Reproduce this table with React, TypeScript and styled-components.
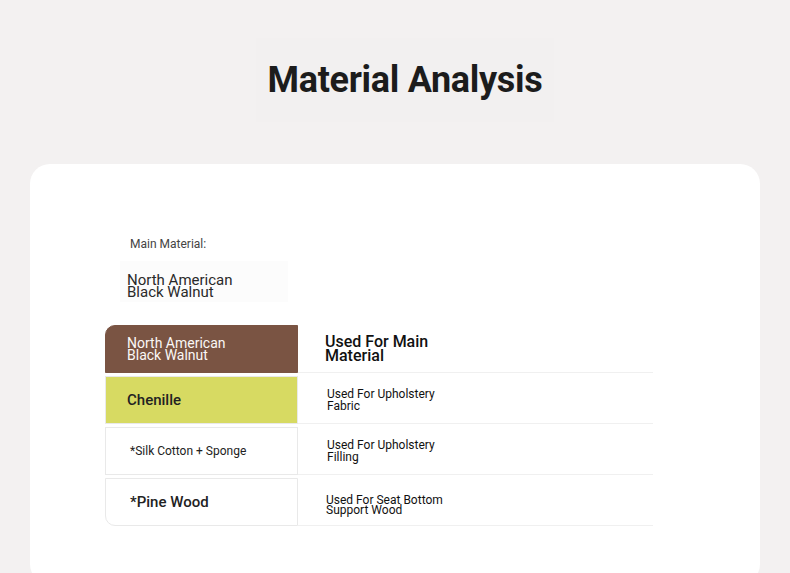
import { createGlobalStyle, styled } from 'styled-components';

const rows = [
  {
    name: ['North American', 'Black Walnut'],
    use: ['Used For Main', 'Material'],
    tone: 'walnut',
    nameSize: 14,
    useSize: 16,
    useLine: 14,
    usePad: 27,
    useShift: 0,
  },
  {
    name: ['Chenille'],
    use: ['Used For Upholstery', 'Fabric'],
    tone: 'chenille',
    nameSize: 15,
    useSize: 12,
    useLine: 12,
    usePad: 29,
    useShift: 1,
  },
  {
    name: ['*Silk Cotton + Sponge'],
    use: ['Used For Upholstery', 'Filling'],
    tone: 'plain',
    nameSize: 12,
    useSize: 12,
    useLine: 12,
    usePad: 29,
    useShift: 0,
  },
  {
    name: ['*Pine Wood'],
    use: ['Used For Seat Bottom', 'Support Wood'],
    tone: 'plain',
    nameSize: 15,
    useSize: 12,
    useLine: 10,
    usePad: 28,
    useShift: 6,
  },
];

const App = () => {
  return (
    <>
      <GlobalStyle />
      <Page>
        <Header>
          <Title>Material Analysis</Title>
        </Header>
        <Card>
          <MainBlock>
            <MainLabel>Main Material:</MainLabel>
            <MainValue>
              North American
              <br />
              Black Walnut
            </MainValue>
          </MainBlock>
          <Table>
            {rows.map((row, idx) => (
              <Row key={row.name.join(' ')}>
                <NameCell
                  $tone={row.tone}
                  $first={idx === 0}
                  $last={idx === rows.length - 1}
                >
                  <CellText $size={row.nameSize}>
                    {row.name.map((line, i) => (
                      <span key={line}>
                        {i > 0 && <br />}
                        {line}
                      </span>
                    ))}
                  </CellText>
                </NameCell>
                <UseCell $pad={row.usePad} $shift={row.useShift}>
                  <UseText $size={row.useSize} $line={row.useLine}>
                    {row.use.map((line, i) => (
                      <span key={line}>
                        {i > 0 && <br />}
                        {line}
                      </span>
                    ))}
                  </UseText>
                </UseCell>
              </Row>
            ))}
          </Table>
        </Card>
      </Page>
    </>
  );
};

export default App;

const GlobalStyle = createGlobalStyle`
  html, body {
    margin: 0;
    padding: 0;
    background: #f3f1f1;
    font-family: Roboto, 'Liberation Sans', sans-serif;
  }
`;

const Page = styled.div`
  width: 790px;
  height: 573px;
  overflow: hidden;
  background: #f3f1f1;
`;

const Header = styled.div`
  display: flex;
  justify-content: center;
  padding: 38px 0 0 20px;
  height: 126px;
  box-sizing: border-box;
`;

const Title = styled.h1`
  margin: 0;
  padding: 0 12px;
  height: 84px;
  display: flex;
  align-items: center;
  background: #f2f0f0;

  color: #1c1c1c;
  font-size: 36px;
  font-weight: 700;
  letter-spacing: -0.3px;
`;

const Card = styled.div`
  margin: 38px 0 0 30px;
  width: 730px;
  height: 420px;
  padding: 58px 0 0 75px;
  box-sizing: border-box;

  background: #fff;
  border-radius: 20px;
`;

const MainBlock = styled.div`
  display: flex;
  flex-direction: column;
  align-items: flex-start;
  margin-left: 15px;
`;

const MainLabel = styled.div`
  padding: 15px 10px 10px 10px;
  color: #444;
  font-size: 12px;
`;

const MainValue = styled.div`
  width: 168px;
  height: 41px;
  padding: 13px 7px 0 7px;
  box-sizing: border-box;
  background: #fcfcfc;

  color: #2a2a2a;
  font-size: 15px;
  font-weight: 400;
  line-height: 12px;
`;

const Table = styled.div`
  display: flex;
  flex-direction: column;
  gap: 3px;
  margin-top: 23px;
  width: 548px;
`;

const Row = styled.div`
  display: flex;
  height: 48px;
`;

const toneBg: Record<string, string> = {
  walnut: '#7a5443',
  chenille: '#d7da62',
  plain: '#ffffff',
};

const NameCell = styled.div<{ $tone: string; $first: boolean; $last: boolean }>`
  display: flex;
  align-items: center;
  width: 193px;
  padding-left: ${(props) => (props.$tone === 'plain' ? '24px' : '21px')};
  box-sizing: border-box;

  background: ${(props) => toneBg[props.$tone]};
  border: 1px solid
    ${(props) => (props.$tone === 'walnut' ? '#7a5443' : '#e9e9e9')};
  border-top-left-radius: ${(props) => (props.$first ? '10px' : '0')};
  border-bottom-left-radius: ${(props) => (props.$last ? '10px' : '0')};

  color: ${(props) => (props.$tone === 'walnut' ? '#fbf8f6' : '#222')};
`;

const CellText = styled.div<{ $size: number }>`
  font-size: ${(props) => props.$size}px;
  font-weight: ${(props) => (props.$size === 15 ? 500 : 400)};
  line-height: 12px;
`;

const UseCell = styled.div<{ $pad: number; $shift: number }>`
  flex: 1;
  display: flex;
  align-items: center;
  padding-left: ${(props) => props.$pad}px;
  padding-top: ${(props) => props.$shift}px;
  border-bottom: 1px solid #f0f0f0;
`;

const UseText = styled.div<{ $size: number; $line: number }>`
  color: #111;
  font-size: ${(props) => props.$size}px;
  font-weight: ${(props) => (props.$size > 12 ? 500 : 400)};
  line-height: ${(props) => props.$line}px;
`;
